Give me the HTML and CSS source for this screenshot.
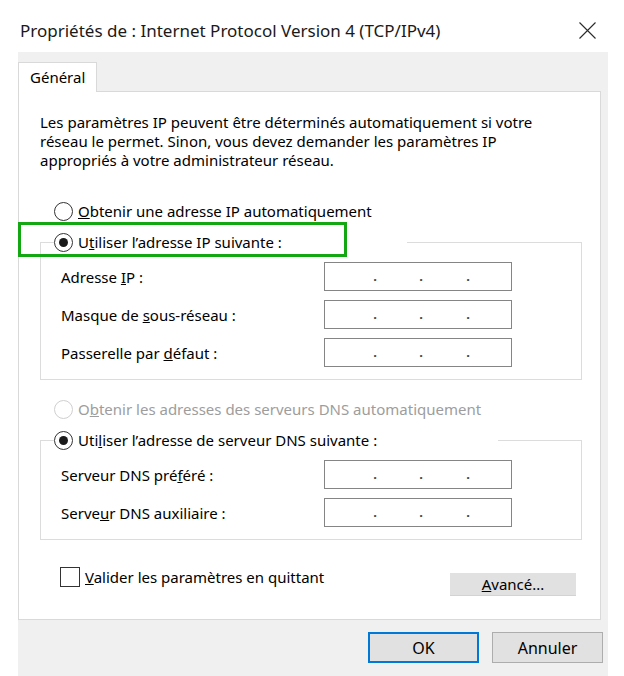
FILE: index.html
```html
<!DOCTYPE html>
<html lang="fr">
<head>
    <meta charset="UTF-8">
    <meta name="viewport" content="width=device-width, initial-scale=1.0">
    <title>Propriétés de : Internet Protocol Version 4 (TCP/IPv4)</title>
    <link rel="stylesheet" href="styles.css">
</head>
<body>
    <div class="window">
        <div class="titlebar">
            <span class="title">Propriétés de : Internet Protocol Version 4 (TCP/IPv4)</span>
            <svg class="close" width="17" height="17" viewBox="0 0 17 17">
                <path d="M0.5 0.5 L16.5 16.5 M16.5 0.5 L0.5 16.5" stroke="#2b2b2b" stroke-width="1.1" fill="none"/>
            </svg>
        </div>

        <div class="dialog">
            <div class="tab">Général</div>

            <div class="panel">
                <p class="intro">Les paramètres IP peuvent être déterminés automatiquement si votre réseau le permet. Sinon, vous devez demander les paramètres IP appropriés à votre administrateur réseau.</p>

                <div class="option first">
                    <span class="radio"></span>
                    <span><u>O</u>btenir une adresse IP automatiquement</span>
                </div>

                <fieldset class="group">
                    <legend class="option legend-ip">
                        <span class="radio checked"></span>
                        <span>U<u>t</u>iliser l’adresse IP suivante :</span>
                    </legend>
                    <div class="fields">
                        <span>Adresse <u>I</u>P :</span>
                        <div class="ip"><span></span><span class="dot">.</span><span></span><span class="dot">.</span><span></span><span class="dot">.</span><span></span></div>
                        <span>Masque de <u>s</u>ous-réseau :</span>
                        <div class="ip"><span></span><span class="dot">.</span><span></span><span class="dot">.</span><span></span><span class="dot">.</span><span></span></div>
                        <span>Passerelle par <u>d</u>éfaut :</span>
                        <div class="ip"><span></span><span class="dot">.</span><span></span><span class="dot">.</span><span></span><span class="dot">.</span><span></span></div>
                    </div>
                </fieldset>

                <div class="option second disabled">
                    <span class="radio"></span>
                    <span>O<u>b</u>tenir les adresses des serveurs DNS automatiquement</span>
                </div>

                <fieldset class="group">
                    <legend class="option legend-dns">
                        <span class="radio checked"></span>
                        <span>Uti<u>l</u>iser l’adresse de serveur DNS suivante :</span>
                    </legend>
                    <div class="fields">
                        <span>Serveur DNS pré<u>f</u>éré :</span>
                        <div class="ip"><span></span><span class="dot">.</span><span></span><span class="dot">.</span><span></span><span class="dot">.</span><span></span></div>
                        <span>Serve<u>u</u>r DNS auxiliaire :</span>
                        <div class="ip"><span></span><span class="dot">.</span><span></span><span class="dot">.</span><span></span><span class="dot">.</span><span></span></div>
                    </div>
                </fieldset>

                <div class="footer">
                    <div class="check-row">
                        <span class="checkbox"></span>
                        <span><u>V</u>alider les paramètres en quittant</span>
                    </div>
                    <button class="advanced"><u>A</u>vancé...</button>
                </div>
            </div>

            <div class="actions">
                <button class="btn default">OK</button>
                <button class="btn">Annuler</button>
            </div>
        </div>

        <div class="highlight"></div>
    </div>
</body>
</html>
```

FILE: styles.css
```css
body {
    margin: 0;
    background-color: #fff;
    font-family: "Noto Sans", sans-serif;
    font-size: 15px;
    color: #000;
}
.window {
    position: relative;
    width: 624px;
    height: 676px;
    overflow: hidden;
    display: flex;
    flex-direction: column;
}
.titlebar {
    height: 52px;
    box-sizing: border-box;
    display: flex;
    align-items: center;
    justify-content: space-between;
    padding: 8px 28px 0 20px;
}
.title {
    font-size: 17px;
    color: #1a1a1a;
}
.close {
    display: block;
}
.dialog {
    flex: 1;
    margin-left: 18px;
    width: 590px;
    background-color: #f0f0f0;
    padding-top: 10px;
}
.tab {
    position: relative;
    z-index: 1;
    width: 79px;
    height: 30px;
    box-sizing: border-box;
    background-color: #fff;
    border: 1px solid #d9d9d9;
    border-bottom: none;
    padding-left: 11px;
    line-height: 28px;
}
.panel {
    width: 583px;
    margin-top: -1px;
    box-sizing: border-box;
    background-color: #fff;
    border: 1px solid #d9d9d9;
    padding: 21px 18px 23px 21px;
}
.intro {
    margin: 0;
    max-width: 502px;
    line-height: 19px;
}
.option {
    display: flex;
    align-items: center;
    gap: 5px;
    height: 20px;
}
.option.first {
    margin: 31px 0 0 14px;
}
.option.second {
    margin: 19px 0 0 14px;
}
.disabled {
    color: #9d9d9d;
}
.radio {
    width: 19px;
    height: 19px;
    box-sizing: border-box;
    border: 1px solid #333;
    border-radius: 50%;
    background-color: #fff;
    display: flex;
    align-items: center;
    justify-content: center;
}
.disabled .radio {
    border-color: #cfcfcf;
}
.radio.checked::after {
    content: "";
    width: 9px;
    height: 9px;
    border-radius: 50%;
    background-color: #1a1a1a;
}
.group {
    margin: 11px 0 0;
    padding: 0;
    border: 1px solid #dcdcdc;
    min-width: 0;
}
.group legend {
    margin-left: 13px;
    padding: 0;
    box-sizing: border-box;
    background-color: #fff;
}
.legend-ip {
    width: 353px;
}
.legend-dns {
    width: 444px;
}
.fields {
    display: grid;
    grid-template-columns: 263px 188px;
    row-gap: 9px;
    align-items: center;
    padding: 10px 0 12px 20px;
}
.ip {
    height: 29px;
    box-sizing: border-box;
    border: 1px solid #858585;
    display: grid;
    grid-template-columns: 48px 4px 42px 4px 43px 4px 1fr;
    line-height: 27px;
    font-size: 13px;
    font-weight: bold;
    color: #444;
}
.dot {
    text-align: center;
}
.footer {
    display: flex;
    justify-content: space-between;
    align-items: flex-start;
}
.check-row {
    display: flex;
    align-items: center;
    gap: 5px;
    margin: 27px 0 0 20px;
}
.checkbox {
    width: 20px;
    height: 20px;
    box-sizing: border-box;
    border: 1px solid #333;
    background-color: #fff;
}
.advanced {
    margin: 33px 6px 0 0;
    width: 126px;
    height: 23px;
    padding: 0;
    border: none;
    border-bottom: 1px solid #bfe3b4;
    background-color: #e1e1e1;
    font-family: inherit;
    font-size: 15px;
    color: #000;
}
.actions {
    display: flex;
    justify-content: flex-end;
    gap: 13px;
    padding: 12px 5px 0 0;
}
.btn {
    width: 111px;
    height: 31px;
    box-sizing: border-box;
    border: 1px solid #adadad;
    background-color: #e1e1e1;
    font-family: inherit;
    font-size: 16px;
    color: #000;
}
.btn.default {
    border: 2px solid #0078d7;
}
.highlight {
    position: absolute;
    left: 18px;
    top: 222px;
    width: 329px;
    height: 35px;
    box-sizing: border-box;
    border: 3px solid #13a813;
}
```
